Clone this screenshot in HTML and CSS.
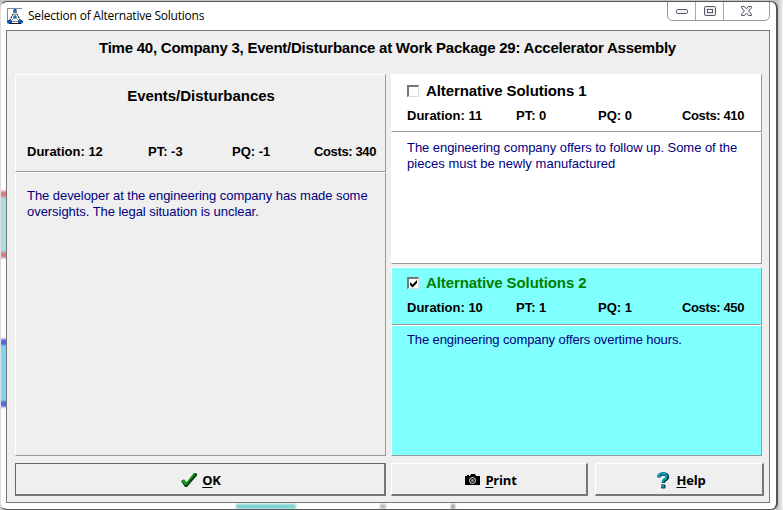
FILE: index.html
```html
<!DOCTYPE html>
<html lang="en">
<head>
<meta charset="utf-8">
<title>Selection of Alternative Solutions</title>
<link rel="stylesheet" href="styles.css">
</head>
<body>
<div class="window">
  <span class="ghost ghost-red"></span><span class="ghost ghost-blue"></span>
  <span class="ghost ghost-teal"></span><span class="ghost ghost-g1"></span><span class="ghost ghost-g2"></span>
  <header class="titlebar">
    <svg class="app-icon" width="16" height="16" viewBox="0 0 16 16">
      <path d="M.5 15V.5H15" fill="none" stroke="#888"/>
      <path d="M7.500 3L2.500 13M8.500 3l5 10" stroke="#222" stroke-width="1.200" stroke-dasharray="2 1"/>
      <path d="M8 3v6M3 13.500h10M8 9l-4 4M8 9l4 4" stroke="#555" stroke-width=".7" fill="none"/>
      <circle cx="8" cy="2.500" r="1.800" fill="#1268c8"/><circle cx="8" cy="9" r="1.800" fill="#1268c8"/>
      <rect x="0" y="12" width="5" height="3.500" rx="1.500" fill="#0756b8"/><rect x="11" y="12" width="5" height="3.500" rx="1.500" fill="#0756b8"/>
      <path d="M2 15.500h12" stroke="#112"/>
    </svg>
    <span class="caption">Selection of Alternative Solutions</span>
    <div class="controls">
      <span class="ctl"><svg width="14" height="12"><rect x="1.500" y="4.500" width="11" height="4" rx="1" fill="#f4f4f4" stroke="#535666"/></svg></span>
      <span class="ctl"><svg width="14" height="12"><rect x="1.500" y="1.500" width="11" height="9" rx="1" fill="#e8e8ec" stroke="#535666"/><rect x="4.500" y="4.500" width="5" height="3" fill="#fff" stroke="#535666"/></svg></span>
      <span class="ctl wide"><svg width="13" height="12"><path d="M1.500 1.500h3l2 2.300 2-2.300h3v1.300L8.700 6l2.800 3.200v1.300h-3l-2-2.300-2 2.300h-3V9.200L4.300 6 1.500 2.800z" fill="#f4f4f4" stroke="#535666"/></svg></span>
    </div>
  </header>
  <main class="client">
    <h1>Time 40, Company 3, Event/Disturbance at Work Package 29: Accelerator Assembly</h1>
    <div class="columns">
      <section class="column">
        <div class="panel events-head">
          <h2>Events/Disturbances</h2>
          <div class="stats"><span>Duration: 12</span><span>PT: -3</span><span>PQ: -1</span><span class="costs">Costs: 340</span></div>
        </div>
        <div class="panel events-body"><p>The developer at the engineering company has made some<br>oversights. The legal situation is unclear.</p></div>
      </section>
      <section class="column">
        <div class="panel alt-head white">
          <h2><span class="check"></span>Alternative Solutions 1</h2>
          <div class="stats"><span>Duration: 11</span><span>PT: 0</span><span>PQ: 0</span><span class="costs">Costs: 410</span></div>
        </div>
        <div class="panel alt-body white"><p>The engineering company offers to follow up. Some of the<br><span class="loose">pieces must be newly manufactured</span></p></div>
        <div class="panel alt-head cyan">
          <h2><span class="check"><svg width="9" height="9"><path d="M1 3v3l2.500 2.500L8 4V1L3.500 5.500z"/></svg></span>Alternative Solutions 2</h2>
          <div class="stats"><span>Duration: 10</span><span>PT: 1</span><span>PQ: 1</span><span class="costs">Costs: 450</span></div>
        </div>
        <div class="panel alt-body cyan"><p class="tight">The engineering company offers overtime hours.</p></div>
      </section>
    </div>
    <footer class="buttons">
      <button class="btn default"><svg width="18" height="16"><path d="M1 9l3-1.500 2.500 3L14 1l3 .5v2L7 15H5z" fill="#063b0b"/><path d="M1.500 8.500l2.500-1L6.500 11 14 1h2L6.500 13H5z" fill="#12a01c"/></svg><span><u>O</u>K</span></button>
      <button class="btn print"><svg width="16" height="12"><path d="M0 2h2V1h2v1h1l1-2h4l1 2h4v9H0z"/><circle cx="7.500" cy="6.500" r="3" fill="none" stroke="#eee"/><circle cx="7.500" cy="6.500" r="1.400" fill="#999"/></svg><span><u>P</u>rint</span></button>
      <button class="btn help"><svg width="13" height="17"><path d="M2 5.500V4q1-2 4-2 4.500 0 4.500 3 0 1.700-2.500 3-1.500.8-1.500 3" fill="none" stroke="#073b50" stroke-width="3.400"/><path d="M1.500 5V4q1-2.500 4-2.500 4 0 4 3 0 1.700-2.500 3-1.500.8-1.500 3" fill="none" stroke="#0aa2b8" stroke-width="2.200"/><rect x="4" y="12.500" width="4.500" height="4" rx="1" fill="#073b50"/><rect x="4" y="12.500" width="3" height="3" fill="#0a9ab0"/></svg><span><u>H</u>elp</span></button>
    </footer>
  </main>
</div>
</body>
</html>
```
FILE: styles.css
```css
* { box-sizing: border-box; }
body {
  margin: 0;
  width: 783px;
  height: 510px;
  overflow: hidden;
  padding-top: 1px;
  background: linear-gradient(90deg, #c4c4c4 776px, #c8c8c8 778px, #f2f2f2 783px);
  font-family: "Liberation Sans", Arial, sans-serif;
  color: #000;
}
h1, h2, p { margin: 0; }
.window {
  position: relative;
  width: 778px;
  height: 509px;
  padding: 0 6px 0 6px;
  border: 1px solid #555;
  border-left-color: #ddd;
  border-right: 2px solid #555;
  border-radius: 7px;
  background: #fff;
  overflow: hidden;
}
.ghost { position: absolute; filter: blur(1px); }
.ghost-red { left: -1px; top: 189px; width: 8px; height: 67px; background: #a9dedd; border: solid #d57b80; border-width: 6px 0; }
.ghost-blue { left: -1px; top: 337px; width: 8px; height: 68px; background: #7bd7ee; border: solid #5663dc; border-width: 6px 0; }
.ghost-teal { left: 235px; top: 502px; width: 60px; height: 5px; background: #7bd1cf; }
.ghost-g1 { left: 379px; top: 502px; width: 6px; height: 5px; background: #bbb; }
.ghost-g2 { left: 450px; top: 502px; width: 4px; height: 5px; background: #999; }
.titlebar { display: flex; height: 28px; }
.app-icon { margin-top: 6px; }
.caption {
  margin: 5px 0 0 5px;
  font: 12px/18px "Open Sans", "Noto Sans", sans-serif;
  letter-spacing: -0.22px;
  white-space: nowrap;
}
.controls {
  display: flex;
  width: 103px;
  height: 20px;
  margin: -1px 0 0 auto;
  border: 1px solid #999;
  border-radius: 0 0 5px 5px;
}
.ctl { display: flex; align-items: center; justify-content: center; width: 28px; border-right: 1px solid #aaa; }
.ctl.wide { flex: 1; border: 0; }
.client {
  position: relative;
  width: 764px;
  height: 473px;
  margin-left: -1px;
  padding: 0 5px 0 8px;
  border: 1px solid #777;
  background: #efefef;
}
h1 {
  height: 43px;
  padding: 7px 0 0 84px;
  font-size: 15px;
  line-height: 20px;
  letter-spacing: -0.235px;
  white-space: nowrap;
}
h2 { font-size: 15px; line-height: 18px; letter-spacing: -0.09px; white-space: nowrap; }
.columns { display: grid; grid-template-columns: 371px 371px; gap: 5px; }
.panel {
  border: 1px solid #fff;
  border-right-color: #999;
  border-bottom-color: #999;
  padding: 0 9px 0 11px;
  overflow: hidden;
}
.events-head { height: 98px; }
.events-head h2 { padding: 12px 1px 0 0; letter-spacing: -0.04px; text-align: center; margin-bottom: 39px; }
.events-body { height: 284px; padding-top: 15px; }
.alt-head { height: 58px; padding-left: 15px; padding-top: 7px; }
.alt-head h2 { display: flex; align-items: center; margin-bottom: 8px; }
.alt-head.cyan { padding-top: 6px; }
.alt-body { height: 132px; padding: 7px 0 0 15px; }
.alt-body.white { margin-bottom: 3px; }
.alt-body.cyan { height: 131px; padding-top: 6px; }
.white { background: #fff; }
.cyan { background: #80ffff; }
.cyan h2 { color: #008000; }
.stats {
  display: grid;
  grid-template-columns: 121px 84px 1fr auto;
  font-size: 13px;
  font-weight: bold;
  line-height: 16px;
  white-space: nowrap;
}
.costs { letter-spacing: -0.38px; }
.alt-head .stats { grid-template-columns: 109px 82px 1fr auto; margin-right: 8px; }
p { font-size: 13px; line-height: 16px; letter-spacing: -0.05px; color: #000080; white-space: nowrap; }
p.tight { letter-spacing: -0.1px; }
.loose { letter-spacing: 0.03px; }
.check {
  display: flex;
  align-items: center;
  justify-content: center;
  width: 12px;
  height: 12px;
  margin-right: 7px;
  border: 1px solid #ddd;
  border-top: 2px solid #777;
  border-left: 2px solid #777;
  background: #fff;
}
.buttons { display: flex; margin-top: 7px; }
.btn {
  display: flex;
  align-items: center;
  justify-content: center;
  height: 33px;
  padding: 2px 0 0;
  border: 1px solid #fff;
  border-right: 2px solid #777;
  border-bottom: 2px solid #777;
  border-radius: 0;
  background: #efefef;
  font: bold 13px/18px "Open Sans", "Noto Sans", sans-serif;
  letter-spacing: -0.2px;
  color: #000;
}
.btn.default { width: 371px; padding-left: 1px; border-top-color: #666; border-left-color: #666; }
.btn svg { margin-right: 4px; }
.print { width: 197px; margin-left: 5px; padding-left: 4px; }
.help { width: 169px; margin-left: 7px; padding-left: 5px; }
.btn.help svg { margin-right: 6px; }
u { text-decoration-thickness: 1px; text-underline-offset: 2px; }
```
